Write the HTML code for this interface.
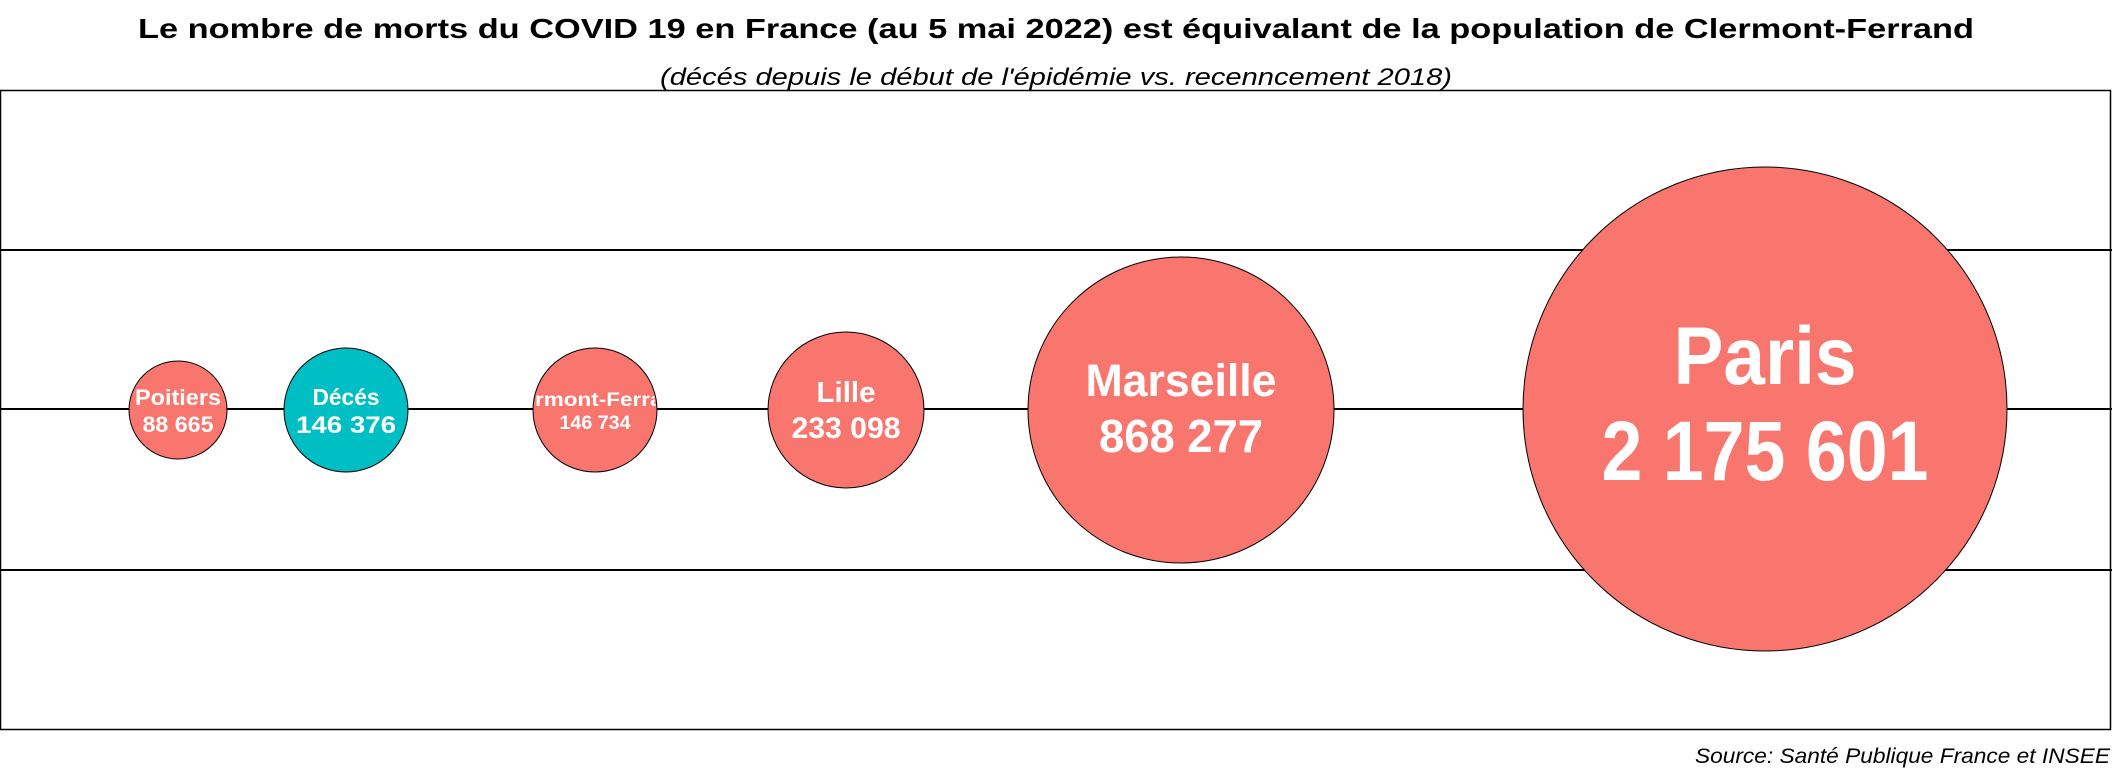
<!DOCTYPE html>
<html><head><meta charset="utf-8"><style>
html,body{margin:0;padding:0;background:#fff;}
svg{display:block;}
text{font-family:"Liberation Sans",Arial,sans-serif;}
</style></head><body>
<svg width="2112" height="768" viewBox="0 0 2112 768" xmlns="http://www.w3.org/2000/svg">
<text x="1056" y="38" text-anchor="middle" font-size="28" font-weight="bold" fill="#000" textLength="1836" lengthAdjust="spacingAndGlyphs">Le nombre de morts du COVID 19 en France (au 5 mai 2022) est équivalant de la population de Clermont-Ferrand</text>
<text x="1056" y="85" text-anchor="middle" font-size="24" font-style="italic" fill="#000" textLength="792" lengthAdjust="spacingAndGlyphs">(décés depuis le début de l'épidémie vs. recenncement 2018)</text>
<rect x="0.5" y="90.5" width="2110" height="639" fill="#fff" stroke="#000" stroke-width="1.5"/>
<line x1="0" y1="250" x2="2112" y2="250" stroke="#000" stroke-width="2"/>
<line x1="0" y1="409" x2="2112" y2="409" stroke="#000" stroke-width="2"/>
<line x1="0" y1="570" x2="2112" y2="570" stroke="#000" stroke-width="2"/>
<defs><clipPath id="cf"><circle cx="595" cy="410" r="61"/></clipPath></defs>
<g stroke="#000" stroke-width="1">
<circle cx="178" cy="410" r="49" fill="#F8766D"/>
<circle cx="346" cy="410" r="62" fill="#00BFC4"/>
<circle cx="595" cy="410" r="62" fill="#F8766D"/>
<circle cx="846" cy="410" r="78" fill="#F8766D"/>
<circle cx="1181" cy="410" r="153" fill="#F8766D"/>
<circle cx="1765" cy="409" r="242" fill="#F8766D"/>
</g>
<g fill="#fff" font-weight="bold" text-anchor="middle" lengthAdjust="spacingAndGlyphs">
<text x="178" y="405" font-size="22" textLength="86" lengthAdjust="spacingAndGlyphs">Poitiers</text>
<text x="178" y="432" font-size="22" textLength="71" lengthAdjust="spacingAndGlyphs">88 665</text>
<text x="346" y="405" font-size="23" textLength="67" lengthAdjust="spacingAndGlyphs">Décés</text>
<text x="346" y="433" font-size="24" textLength="100" lengthAdjust="spacingAndGlyphs">146 376</text>
<g clip-path="url(#cf)"><text x="595" y="406" font-size="19" textLength="190" lengthAdjust="spacingAndGlyphs">Clermont-Ferrand</text>
<text x="595" y="429" font-size="19" textLength="71" lengthAdjust="spacingAndGlyphs">146 734</text></g>
<text x="846" y="402" font-size="29" textLength="59" lengthAdjust="spacingAndGlyphs">Lille</text>
<text x="846" y="438" font-size="30" textLength="109" lengthAdjust="spacingAndGlyphs">233 098</text>
<text x="1181" y="396" font-size="45" textLength="191" lengthAdjust="spacingAndGlyphs">Marseille</text>
<text x="1181" y="452" font-size="46" textLength="164" lengthAdjust="spacingAndGlyphs">868 277</text>
<text x="1765" y="384" font-size="82" textLength="183" lengthAdjust="spacingAndGlyphs">Paris</text>
<text x="1765" y="480" font-size="84" textLength="327" lengthAdjust="spacingAndGlyphs">2 175 601</text>
</g>
<text x="2110" y="763" text-anchor="end" font-size="21" font-style="italic" fill="#000" textLength="415" lengthAdjust="spacingAndGlyphs">Source: Santé Publique France et INSEE</text>
</svg>
</body></html>
